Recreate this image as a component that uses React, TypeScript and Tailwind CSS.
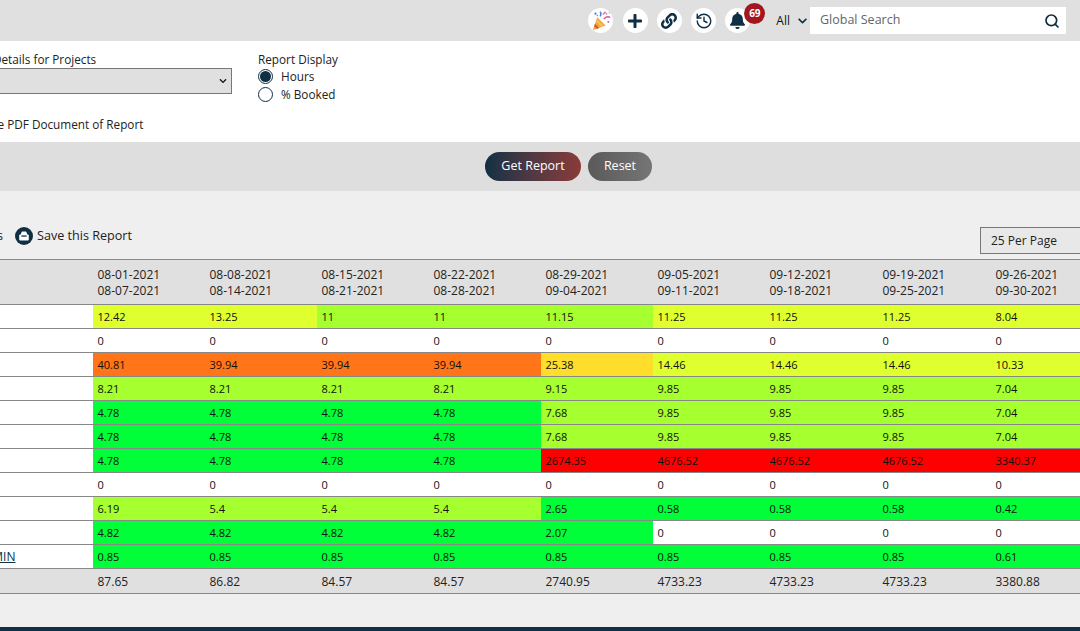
import React from "react";
import { FaPlus, FaLink, FaBell, FaChevronDown } from "react-icons/fa";
import { History, Search } from "lucide-react";

const Y = "bg-[#e0ff2e]", L = "bg-[#a6ff2e]", G = "bg-[#00ff38]", O = "bg-[#ff7518]", A = "bg-[#ffdd2b]", R = "bg-[#ff0000]", W = "bg-white";
const cols = ["w-[112px]", "w-[112px]", "w-[112px]", "w-[112px]", "w-[112px]", "w-[112px]", "w-[113px]", "w-[113px]", "w-[113px]"];

type Cell = [string, string];
const rep = (v: string, c: string, n: number): Cell[] => Array.from({ length: n }, () => [v, c] as Cell);
const rows: Cell[][] = [
  [["12.42", Y], ["13.25", Y], ["11", L], ["11", L], ["11.15", L], ["11.25", Y], ["11.25", Y], ["11.25", Y], ["8.04", Y]],
  rep("0", W, 9),
  [["40.81", O], ...rep("39.94", O, 3), ["25.38", A], ...rep("14.46", Y, 3), ["10.33", Y]],
  [...rep("8.21", L, 4), ["9.15", L], ...rep("9.85", L, 3), ["7.04", L]],
  [...rep("4.78", G, 4), ["7.68", L], ...rep("9.85", L, 3), ["7.04", L]],
  [...rep("4.78", G, 4), ["7.68", L], ...rep("9.85", L, 3), ["7.04", L]],
  [...rep("4.78", G, 4), ["2674.35", R], ...rep("4676.52", R, 3), ["3340.37", R]],
  rep("0", W, 9),
  [["6.19", L], ...rep("5.4", L, 3), ["2.65", G], ...rep("0.58", G, 3), ["0.42", G]],
  [...rep("4.82", G, 4), ["2.07", G], ...rep("0", W, 4)],
  [...rep("0.85", G, 8), ["0.61", G]],
];
const heads = [
  ["08-01-2021", "08-07-2021"], ["08-08-2021", "08-14-2021"], ["08-15-2021", "08-21-2021"],
  ["08-22-2021", "08-28-2021"], ["08-29-2021", "09-04-2021"], ["09-05-2021", "09-11-2021"],
  ["09-12-2021", "09-18-2021"], ["09-19-2021", "09-25-2021"], ["09-26-2021", "09-30-2021"],
];
const totals = ["87.65", "86.82", "84.57", "84.57", "2740.95", "4733.23", "4733.23", "4733.23", "3380.88"];

function Circle({ children }: { children: React.ReactNode }) {
  return <div className="relative flex h-[25px] w-[25px] items-center justify-center rounded-full bg-white text-[#0f2f45]">{children}</div>;
}

function Popper() {
  return (
    <svg viewBox="0 0 24 24" className="h-[22px] w-[22px]">
      <path d="M3 22 L8 8 L17 17 Z" fill="#f3a93b" />
      <path d="M5.5 15 L10 19.5 L7.5 20.6 L4.5 17.8 Z" fill="#d9534f" />
      <path d="M7.5 10 L14.5 17 L12 18 L6.8 12.2 Z" fill="#e9c46a" />
      <path d="M11 7 Q13 4 11 2" stroke="#3f7fd9" strokeWidth="1.5" fill="none" />
      <path d="M15 10 Q18 6 22 8" stroke="#d94fa0" strokeWidth="1.5" fill="none" />
      <path d="M14 5 L17 2" stroke="#e56a9c" strokeWidth="1.5" />
      <circle cx="6" cy="4" r="1.2" fill="#3f7fd9" />
      <circle cx="20" cy="13" r="1" fill="#8a5fd0" />
      <circle cx="18" cy="4" r="1" fill="#e07ab0" />
      <circle cx="8" cy="6" r="0.8" fill="#49a85a" />
      <circle cx="21" cy="3" r="0.8" fill="#c9a0d8" />
    </svg>
  );
}

export default function App() {
  return (
    <div className="flex h-[631px] w-[1080px] flex-col overflow-hidden bg-[#efefef] font-['Open_Sans',sans-serif] text-[12px] text-[#222]">
      <header className="flex h-[41px] shrink-0 items-center justify-end bg-[#e0e0e0] pr-[14px]">
        <div className="mr-[26px] flex items-center gap-[9.25px]">
          <Circle><Popper /></Circle>
          <Circle><FaPlus className="h-[16px] w-[16px]" /></Circle>
          <Circle><FaLink className="h-[16px] w-[16px]" /></Circle>
          <Circle><History className="h-[18px] w-[18px]" strokeWidth={1.9} /></Circle>
          <Circle>
            <FaBell className="h-[17px] w-[17px]" />
            <span className="absolute left-[19px] top-[-5px] flex h-[21px] w-[21px] items-center justify-center rounded-full bg-[#a3161f] text-[10px] font-bold text-white">69</span>
          </Circle>
        </div>
        <span className="text-[#111]">All</span>
        <FaChevronDown className="ml-[7px] mr-[2px] h-[10px] w-[11px] text-[#0f2f45]" />
        <div className="flex h-[27px] w-[256px] items-center justify-between bg-white pl-[10px] pr-[6px]">
          <span className="text-[12.5px] text-[#666]">Global Search</span>
          <Search className="h-[16px] w-[16px] text-[#0f2f45]" strokeWidth={2.6} />
        </div>
      </header>

      <section className="flex h-[101px] shrink-0 bg-white pt-[10px] text-[11.75px]">
        <div className="w-[258px] shrink-0">
          <div className="ml-[-7px] h-[17px] leading-[17px]">Details for Projects</div>
          <div className="ml-[-10px] flex h-[26px] w-[242px] items-center justify-end border border-[#777] bg-[#e0e0e0] pr-[3px]">
            <FaChevronDown className="h-[8px] w-[10px] text-[#111]" />
          </div>
          <div className="ml-[-32px] mt-[22px] leading-[17px]">Create PDF Document of Report</div>
        </div>
        <div>
          <div className="h-[16px] leading-[17px]">Report Display</div>
          <div className="flex h-[18px] items-center gap-[8px]">
            <span className="flex h-[15px] w-[15px] items-center justify-center rounded-full border border-[#0f2f45]">
              <span className="h-[11px] w-[11px] rounded-full bg-[#0f2f45]" />
            </span>
            <span className="pt-[2px]">Hours</span>
          </div>
          <div className="flex h-[18px] items-center gap-[8px]">
            <span className="h-[15px] w-[15px] rounded-full border border-[#0f2f45] bg-white" />
            <span className="pt-[2px]">% Booked</span>
          </div>
        </div>
      </section>

      <section className="flex h-[49px] shrink-0 items-center justify-center gap-[7px] bg-[#dedede] pl-[57px]">
        <div className="flex h-[29px] w-[96px] items-center justify-center rounded-full bg-gradient-to-r from-[#0f2f45] to-[#8a3a38] text-[12.5px] text-white">Get Report</div>
        <div className="flex h-[29px] w-[64px] items-center justify-center rounded-full bg-gradient-to-r from-[#5a5a5a] to-[#757575] text-[12.5px] text-white">Reset</div>
      </section>

      <section className="flex h-[68px] shrink-0 items-start justify-between">
        <div className="ml-[-3px] mt-[36px] flex items-center text-[12.6px]">
          <span className="mr-[12px]">s</span>
          <span className="mr-[4px] flex h-[18px] w-[18px] items-center justify-center rounded-full bg-[#0f2f45]">
            <svg viewBox="0 0 12 12" className="h-[12px] w-[12px]">
              <path d="M2.6 5 L3.4 2.4 Q3.6 1.6 4.4 1.6 H7.6 Q8.4 1.6 8.6 2.4 L9.4 5 Z" fill="#fff" />
              <rect x="1.2" y="4.6" width="9.6" height="6" rx="1" fill="#fff" />
              <rect x="3.4" y="5.4" width="5.2" height="1.3" fill="#0f2f45" />
            </svg>
          </span>
          <span>Save this Report</span>
        </div>
        <div className="mr-[-10px] mt-[36px] flex h-[27px] w-[110px] items-center border border-[#777] bg-[#e8e8e8] pl-[10px]">25 Per Page</div>
      </section>

      <div className="flex h-[46px] shrink-0 border-y border-[#888] bg-[#e0e0e0]">
        <div className="w-[93px] shrink-0" />
        {heads.map((h, i) => (
          <div key={i} className={`${cols[i]} shrink-0 pl-[4.5px] pt-[7px] leading-[16px]`}>
            <div>{h[0]}</div>
            <div>{h[1]}</div>
          </div>
        ))}
      </div>

      {rows.map((r, ri) => (
        <div key={ri} className="flex h-[24px] shrink-0 border-b border-[#888]">
          <div className="w-[93px] shrink-0 overflow-hidden bg-white">
            {ri === 10 && <span className="ml-[-24px] inline-block leading-[24px] text-[#0f2f45] underline">ADMIN</span>}
          </div>
          {r.map(([v, c], i) => (
            <div key={i} className={`${cols[i]} ${c} shrink-0 pl-[4.5px] text-[11px] leading-[23px] text-[#111]`}>{v}</div>
          ))}
        </div>
      ))}

      <div className="flex h-[25px] shrink-0 border-b border-[#888] bg-[#e0e0e0]">
        <div className="w-[93px] shrink-0" />
        {totals.map((v, i) => (
          <div key={i} className={`${cols[i]} shrink-0 pl-[4.5px] leading-[25px]`}>{v}</div>
        ))}
      </div>

      <div className="flex-1" />
      <footer className="h-[4px] shrink-0 bg-[#0f2f45]" />
    </div>
  );
}
